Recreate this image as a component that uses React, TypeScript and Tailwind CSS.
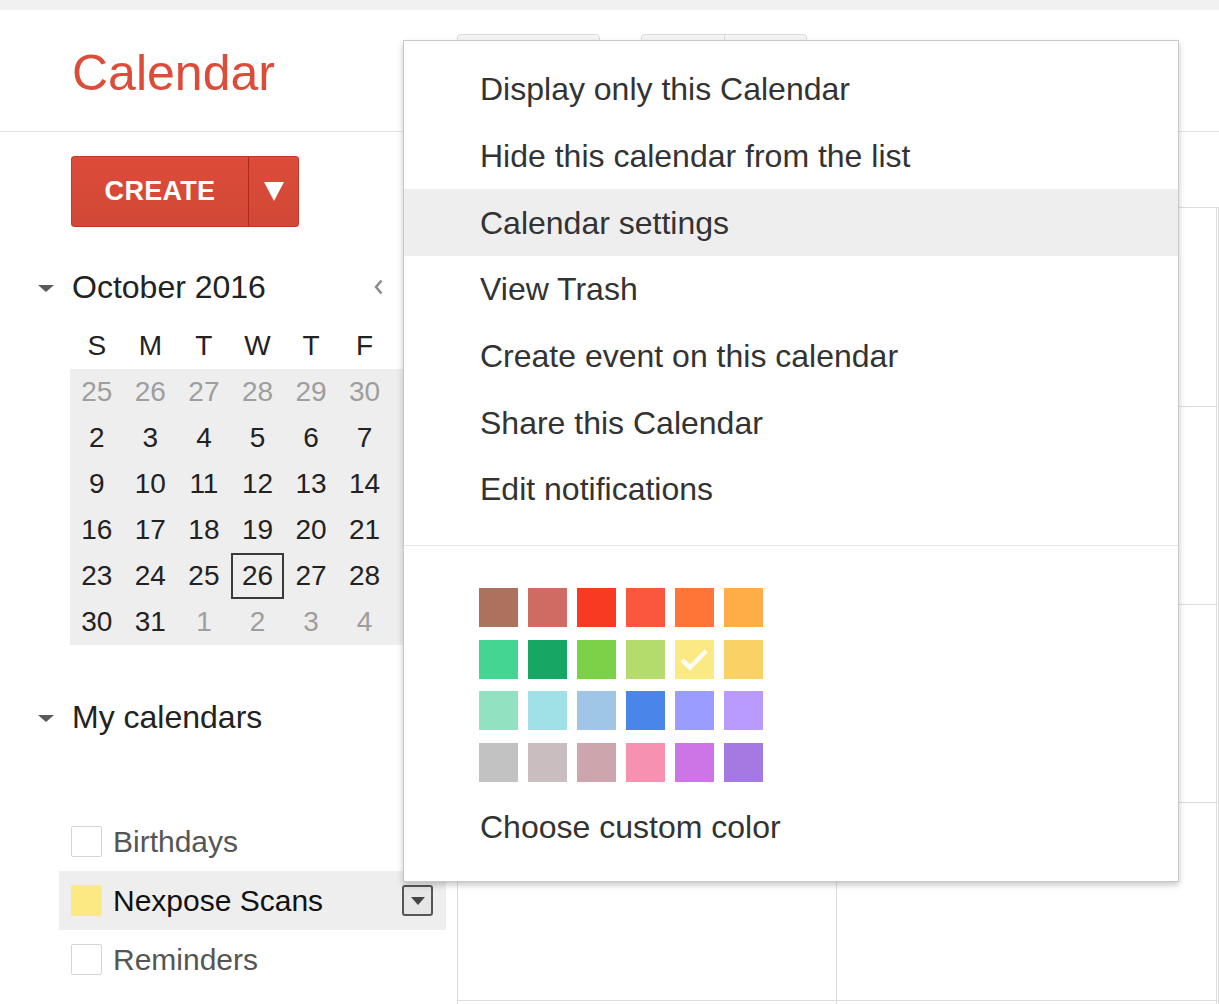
import React from "react";

const swatches = [
  ["#ac725e", "#d06b64", "#f83a22", "#fa573c", "#ff7537", "#ffad46"],
  ["#42d692", "#16a765", "#7bd148", "#b3dc6c", "#fbe983", "#fad165"],
  ["#92e1c0", "#9fe1e7", "#9fc6e7", "#4986e7", "#9a9cff", "#b99aff"],
  ["#c2c2c2", "#cabdbf", "#cca6ac", "#f691b2", "#cd74e6", "#a47ae2"],
];

const menuItems = [
  "Display only this Calendar",
  "Hide this calendar from the list",
  "Calendar settings",
  "View Trash",
  "Create event on this calendar",
  "Share this Calendar",
  "Edit notifications",
];

// weeks of october 2016, [day, inMonth]
const weeks: [number, boolean][][] = [
  [[25, false], [26, false], [27, false], [28, false], [29, false], [30, false], [1, true]],
  [[2, true], [3, true], [4, true], [5, true], [6, true], [7, true], [8, true]],
  [[9, true], [10, true], [11, true], [12, true], [13, true], [14, true], [15, true]],
  [[16, true], [17, true], [18, true], [19, true], [20, true], [21, true], [22, true]],
  [[23, true], [24, true], [25, true], [26, true], [27, true], [28, true], [29, true]],
  [[30, true], [31, true], [1, false], [2, false], [3, false], [4, false], [5, false]],
];

function Caret({ className }: { className?: string }) {
  return (
    <svg width="18" height="9" viewBox="0 0 18 9" className={className}>
      <path d="M1 1 L17 1 L9 8 Z" fill="#5a5a5a" />
    </svg>
  );
}

function Checkbox() {
  return <div className="w-[31px] h-[31px] border border-[#d4d4d4] rounded-[2px] bg-white" />;
}

export default function App() {
  return (
    <div className="relative h-screen bg-white overflow-hidden font-['Liberation_Sans',Arial,sans-serif] text-[#222]">
      <div className="h-[10px] bg-[#f1f1f1]" />

      {/* header */}
      <div className="flex h-[122px] border-b border-[#e5e5e5]">
        <div className="w-[457px] pl-[72px] pt-[38px] text-[50px] leading-none text-[#dd4b39]">Calendar</div>
        <div className="flex gap-[41px] pt-[24px]">
          <div className="w-[143px] h-[36px] rounded-[4px] border border-[#d9d9d9] bg-[#f5f5f5]" />
          <div className="flex w-[166px] h-[36px] rounded-[4px] border border-[#d9d9d9] bg-[#f5f5f5]">
            <div className="w-[83px] border-r border-[#d9d9d9]" />
          </div>
        </div>
      </div>

      <div className="flex">
        {/* sidebar */}
        <div className="w-[457px] shrink-0">
          <div className="ml-[71px] mt-[24px] flex h-[71px] w-[228px] rounded-[3px] border border-[#c53727] bg-gradient-to-b from-[#dd4b39] to-[#d14836] text-white">
            <div className="flex w-[177px] items-center justify-center border-r border-[#b0281a] text-[27px] font-bold tracking-[0.3px]">
              CREATE
            </div>
            <div className="flex flex-1 items-center justify-center">
              <svg width="20" height="19" viewBox="0 0 20 19">
                <path d="M0 0 L20 0 L10 19 Z" fill="#fff" />
              </svg>
            </div>
          </div>

          <div className="mt-[42px] flex h-[36px] items-center pl-[37px] pr-[10px]">
            <Caret className="mt-[2px]" />
            <span className="ml-[17px] text-[32px] leading-[36px]">October 2016</span>
            <span className="ml-auto flex w-[20px] justify-center">
              <svg width="9" height="16" viewBox="0 0 9 16">
                <path d="M7.5 1.5 L2 8 L7.5 14.5" fill="none" stroke="#8a8a8a" strokeWidth="2.5" />
              </svg>
            </span>
            <span className="ml-[40px] flex w-[19px] justify-center">
              <svg width="9" height="16" viewBox="0 0 9 16">
                <path d="M1.5 1.5 L7 8 L1.5 14.5" fill="none" stroke="#8a8a8a" strokeWidth="2.5" />
              </svg>
            </span>
          </div>

          <div className="ml-[70px] mt-[18px] w-[375px] text-[28px]">
            <div className="grid h-[46px] grid-cols-7 items-center text-center">
              {["S", "M", "T", "W", "T", "F", "S"].map((d, i) => (
                <span key={i}>{d}</span>
              ))}
            </div>
            <div className="bg-[#eeeeee]">
              {weeks.map((w, r) => (
                <div key={r} className="grid h-[46px] grid-cols-7">
                  {w.map(([d, inMonth], c) => (
                    <div
                      key={c}
                      className={
                        "flex items-center justify-center " +
                        (inMonth ? "text-[#222] " : "text-[#9e9e9e] ") +
                        (r === 4 && c === 3 ? "border-2 border-[#3a3a3a]" : "")
                      }
                    >
                      {d}
                    </div>
                  ))}
                </div>
              ))}
            </div>
          </div>

          <div className="mt-[54px] flex h-[36px] items-center pl-[37px]">
            <Caret className="mt-[2px]" />
            <span className="ml-[17px] text-[32px] leading-[36px]">My calendars</span>
          </div>

          <div className="mt-[76px] text-[30px]">
            <div className="flex h-[60px] items-center gap-[11px] pl-[71px] text-[#555]">
              <Checkbox />
              <span>Birthdays</span>
            </div>
            <div className="ml-[59px] mr-[11px] flex h-[59px] items-center bg-[#eeeeee] pl-[12px] pr-[13px]">
              <div className="h-[31px] w-[31px] rounded-[2px] bg-[#fbe983]" />
              <span className="ml-[11px] text-[#111]">Nexpose Scans</span>
              <div className="ml-auto flex h-[31px] w-[31px] items-center justify-center rounded-[3px] border-2 border-[#555] bg-[#e6e6e6]">
                <svg width="14" height="8" viewBox="0 0 14 8">
                  <path d="M0 0 L14 0 L7 8 Z" fill="#444" />
                </svg>
              </div>
            </div>
            <div className="flex h-[59px] items-center gap-[11px] pl-[71px] text-[#555]">
              <Checkbox />
              <span>Reminders</span>
            </div>
          </div>
        </div>

        {/* month grid */}
        <div className="flex-1 pt-[75px]">
          <div className="grid grid-cols-[379px_380px_1fr] border-l border-t border-[#dddddd]">
            {Array.from({ length: 15 }).map((_, i) => (
              <div
                key={i}
                className={"border-b border-r border-[#dddddd] " + (i < 3 ? "h-[199px]" : "h-[198px]")}
              />
            ))}
          </div>
        </div>
      </div>

      {/* context menu */}
      <div className="absolute left-[403px] top-[40px] h-[842px] w-[776px] border border-[#c8c8c8] bg-white pt-[15px] text-[32px] text-[#333] shadow-[0_3px_6px_rgba(0,0,0,0.22)]">
        {menuItems.map((m, i) => (
          <div key={m} className={"flex h-[66.7px] items-center pl-[76px] " + (i === 2 ? "bg-[#eeeeee]" : "")}>
            {m}
          </div>
        ))}
        <div className="mt-[22px] border-t border-[#e5e5e5]" />
        <div className="ml-[75px] mt-[42px] flex flex-col gap-[12.7px]">
          {swatches.map((row, r) => (
            <div key={r} className="flex gap-[10px]">
              {row.map((c, k) => (
                <div key={c} className="relative h-[39px] w-[39px]" style={{ backgroundColor: c }}>
                  {r === 1 && k === 4 && (
                    <svg className="absolute inset-0" width="39" height="39" viewBox="0 0 39 39">
                      <path d="M7 20 L15 27.5 L31 11" fill="none" stroke="#fff" strokeWidth="4.5" strokeOpacity="0.9" />
                    </svg>
                  )}
                </div>
              ))}
            </div>
          ))}
        </div>
        <div className="mt-[27px] pl-[76px] leading-[37px]">Choose custom color</div>
      </div>
    </div>
  );
}
